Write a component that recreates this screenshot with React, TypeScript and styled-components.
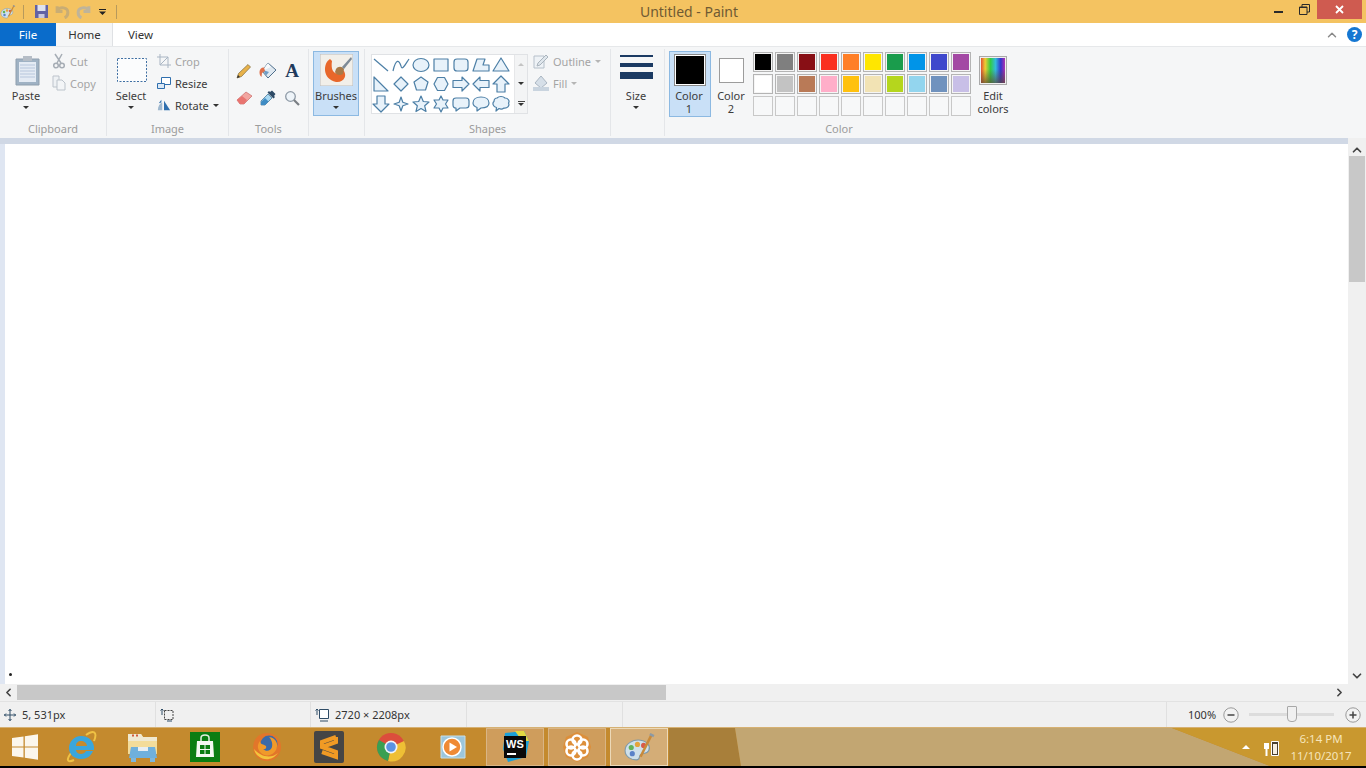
import React from "react";
import styled, { createGlobalStyle } from "styled-components";
import { ChevronUp, ChevronDown, ChevronLeft, ChevronRight } from "lucide-react";

const GlobalStyle = createGlobalStyle`
	html, body {
		margin: 0;
		padding: 0;
		background: #fff;
	}
	* {
		box-sizing: border-box;
	}
`;

const row1 = ["#000000", "#7f7f7f", "#880f15", "#fa3020", "#ff7f27", "#ffe600", "#1a9c4c", "#0094e8", "#3f48cc", "#a349a4"];
const row2 = ["#ffffff", "#c3c3c3", "#b97a57", "#ffaec9", "#ffc10e", "#f2e3b4", "#b5d61d", "#93d5ee", "#7092be", "#c8bfe7"];
const palette = [...row1, ...row2, ...Array(10).fill("")];

const shapePaths = [
	"M2 3L16 15",
	"M1 15C4 2 7 4 9 10C10 15 13 9 17 3",
	"M1 9a8 6.5 0 1 0 16 0a8 6.5 0 1 0-16 0Z",
	"M2 3H16V15H2Z",
	"M5 3H13Q16 3 16 6V12Q16 15 13 15H5Q2 15 2 12V6Q2 3 5 3Z",
	"M1 15L5 3H13L11 9H17V15Z",
	"M9 2L17 15H1Z",
	"M2 2V16H16Z",
	"M9 2L16 9L9 16L2 9Z",
	"M9 2L16 7L13.500 15H4.500L2 7Z",
	"M5.500 2.500H12.500L16 9L12.500 15.500H5.500L2 9Z",
	"M1 5.500H10V2L17 9L10 16V12.500H1Z",
	"M17 5.500H8V2L1 9L8 16V12.500H17Z",
	"M9 1L17 9H13V17H5V9H1Z",
	"M5 1H13V9H17L9 17L1 9H5Z",
	"M9 2L10.800 7.200L16 9L10.800 10.800L9 16L7.200 10.800L2 9L7.200 7.200Z",
	"M9 1L11.300 6.500L17 7L12.700 10.800L14 16.500L9 13.500L4 16.500L5.300 10.800L1 7L6.700 6.500Z",
	"M9 1L11 5H16L13.500 9L16 13H11L9 17L7 13H2L4.500 9L2 5H7Z",
	"M4 3H14Q17 3 17 6V10Q17 13 14 13H8L4 16V13Q1 13 1 10V6Q1 3 4 3Z",
	"M9 2C14 2 17 4.500 17 8C17 11 14 13 9 13L5 16V12.500C2.500 11.500 1 10 1 8C1 4.500 4 2 9 2Z",
	"M5 3C7 1 11 1 13 3C16 3 18 6 16.500 8C18 11 15 13.500 12 13C10 14.500 8 14 7 13.500L4 16L4.500 12.500C1 12 0 8 2 6.500C2 4.500 3.500 3 5 3Z",
];

const Caret = styled.span<{ $c?: string }>`
	display: block;
	width: 0;
	height: 0;
	border-left: 3px solid transparent;
	border-right: 3px solid transparent;
	border-top: 3px solid ${(p) => p.$c || "#333"};
`;

const Screen = styled.div`
	width: 1366px;
	height: 768px;
	display: flex;
	flex-direction: column;
	overflow: hidden;
	font-family: "Noto Sans", "Open Sans", sans-serif;
	font-size: 11px;
	color: #3c3c3c;
`;

const TitleBar = styled.div`
	height: 23px;
	background: #f4c361;
	display: grid;
	grid-template-columns: 1fr auto 1fr;
	align-items: flex-start;
	flex: none;
`;

const QuickAccess = styled.div`
	display: flex;
	align-items: center;
	height: 23px;
`;

const QuickSlot = styled.div<{ $w: number }>`
	width: ${(p) => p.$w}px;
	display: flex;
	justify-content: center;
	align-items: center;
`;

const QuickDivider = styled.div`
	width: 1px;
	height: 14px;
	background: #b79a5c;
`;

const WindowTitle = styled.div`
	font-size: 14px;
	line-height: 23px;
	color: #6f5a33;
	padding-left: 12px;
`;

const WindowControls = styled.div`
	display: flex;
	justify-content: flex-end;
	padding-right: 4px;
`;

const ControlButton = styled.div<{ $w: number; $close?: boolean }>`
	width: ${(p) => p.$w}px;
	height: 19px;
	display: flex;
	align-items: center;
	justify-content: center;
	background: ${(p) => (p.$close ? "#cf5b50" : "transparent")};
`;

const TabRow = styled.div`
	height: 23px;
	flex: none;
	background: #fff;
	display: flex;
	align-items: stretch;
	font-size: 11.500px;
`;

const FileTab = styled.div`
	width: 56px;
	background: #0a6ccb;
	color: #fff;
	display: flex;
	align-items: center;
	justify-content: center;
`;

const Tab = styled.div<{ $active?: boolean }>`
	width: ${(p) => (p.$active ? 57 : 55)}px;
	padding-left: ${(p) => (p.$active ? 1 : 0)}px;
	display: flex;
	align-items: center;
	justify-content: center;
	background: ${(p) => (p.$active ? "#f5f6f7" : "#fff")};
	border-right: ${(p) => (p.$active ? "1px solid #dfe1e4" : "none")};
	color: #333;
`;

const TabSpacer = styled.div`
	flex: 1;
`;

const TabTools = styled.div`
	display: flex;
	align-items: center;
	gap: 8px;
	padding-right: 4px;
`;

const HelpBadge = styled.div`
	width: 15px;
	height: 15px;
	border-radius: 50%;
	background: #1577d2;
	color: #fff;
	font-weight: 700;
	font-size: 12px;
	line-height: 15px;
	text-align: center;
`;

const Ribbon = styled.div`
	height: 92px;
	flex: none;
	background: #f5f6f7;
	display: flex;
	border-top: 1px solid #e6e8ea;
`;

const Group = styled.div<{ $w: number; $last?: boolean }>`
	width: ${(p) => p.$w}px;
	flex: none;
	display: flex;
	flex-direction: column;
	margin: 2px 0;
	border-right: ${(p) => (p.$last ? "none" : "1px solid #e4e6e9")};
`;

const GroupBody = styled.div<{ $pl?: number }>`
	flex: 1;
	display: flex;
	align-items: flex-start;
	padding-left: ${(p) => p.$pl || 0}px;
	min-height: 0;
`;

const GroupLabel = styled.div<{ $pr?: number }>`
	height: 14px;
	line-height: 14px;
	text-align: center;
	color: #9c9c9c;
	padding-right: ${(p) => p.$pr || 0}px;
	flex: none;
`;

const LargeButton = styled.div<{ $w: number; $on?: boolean; $h?: number; $ml?: number }>`
	width: ${(p) => p.$w}px;
	height: ${(p) => p.$h || 64}px;
	margin: 2px 0 0 ${(p) => p.$ml || 0}px;
	flex: none;
	display: flex;
	flex-direction: column;
	align-items: center;
	background: ${(p) => (p.$on ? "#c9e0f7" : "transparent")};
	border: 1px solid ${(p) => (p.$on ? "#8cb9e2" : "transparent")};
	color: #3c3c3c;
`;

const LargeIcon = styled.div`
	height: 36px;
	display: flex;
	align-items: center;
	justify-content: center;
	flex: none;
`;

const LargeText = styled.div<{ $pr?: number }>`
	line-height: 13px;
	text-align: center;
	margin-top: 1px;
	padding-right: ${(p) => p.$pr || 0}px;
`;

const CaretRow = styled.div`
	height: 11px;
	display: flex;
	align-items: center;
	justify-content: center;
`;

const SmallColumn = styled.div<{ $ml: number }>`
	margin-left: ${(p) => p.$ml}px;
	padding-top: 1px;
	display: flex;
	flex-direction: column;
`;

const SmallButton = styled.div<{ $off?: boolean }>`
	height: 22px;
	display: flex;
	align-items: center;
	gap: 4px;
	color: ${(p) => (p.$off ? "#a4a4a4" : "#3c3c3c")};
	white-space: nowrap;
`;

const ToolsGrid = styled.div`
	display: grid;
	grid-template-columns: repeat(3, 24px);
	grid-auto-rows: 27px;
	margin: 8px 0 0 3px;
`;

const ToolCell = styled.div`
	display: flex;
	align-items: center;
	justify-content: center;
`;

const TextTool = styled.span`
	font-family: "Liberation Serif", serif;
	font-weight: 700;
	font-size: 19px;
	color: #1f3a5c;
`;

const Gallery = styled.div`
	margin: 5px 0 0 6px;
	width: 157px;
	height: 60px;
	display: flex;
	background: #fff;
	border: 1px solid #e0e2e5;
	flex: none;
`;

const ShapesGrid = styled.div`
	flex: 1;
	display: grid;
	grid-template-columns: repeat(7, 20px);
	grid-auto-rows: 19.500px;
	align-items: center;
	justify-items: center;
	margin-left: -1px;
`;

const GalleryScroll = styled.div`
	width: 13px;
	background: #f3f4f5;
	border-left: 1px solid #e6e7e9;
	display: flex;
	flex-direction: column;
`;

const GalleryStep = styled.div`
	flex: 1;
	display: flex;
	align-items: center;
	justify-content: center;
	flex-direction: column;
	gap: 1px;
`;

const UpCaret = styled.span`
	width: 0;
	height: 0;
	border-left: 3px solid transparent;
	border-right: 3px solid transparent;
	border-bottom: 3px solid #c4c4c4;
`;

const StackBar = styled.span`
	width: 7px;
	height: 1px;
	background: #444;
`;

const SizeLine = styled.div<{ $h: number; $mt: number }>`
	width: 33px;
	height: ${(p) => p.$h}px;
	margin-top: ${(p) => p.$mt}px;
	background: #1b3a63;
`;

const SizeIcon = styled.div`
	height: 36px;
	display: flex;
	flex-direction: column;
`;

const Swatch = styled.div<{ $size: number; $fill: string; $frame: string }>`
	width: ${(p) => p.$size}px;
	height: ${(p) => p.$size}px;
	background: ${(p) => p.$fill};
	border: 1px solid ${(p) => p.$frame};
	box-shadow: inset 0 0 0 1px #fff;
`;

const PaletteGrid = styled.div`
	display: grid;
	grid-template-columns: repeat(10, 20px);
	grid-auto-rows: 20px;
	gap: 2px;
	margin: 3px 0 0 2px;
	flex: none;
`;

const PaletteCell = styled.div<{ $c: string }>`
	border: 1px solid ${(p) => (p.$c ? "#b4b4b4" : "#c8c8c8")};
	background: ${(p) => p.$c || "#f7f8f9"};
	box-shadow: inset 0 0 0 1px ${(p) => (p.$c ? "#f5f5f5" : "#f7f8f9")};
`;

const RainbowBox = styled.div`
	width: 28px;
	height: 29px;
	border: 1px solid #a9a9a9;
	box-shadow: inset 0 0 0 1px #eee;
	background: linear-gradient(to bottom, rgba(255, 255, 255, 0) 45%, rgba(90, 70, 50, 0.75) 100%),
		linear-gradient(to right, #d33, #ec3, #3c4, #3bd, #33c, #c3a);
`;

const Workspace = styled.div`
	flex: 1;
	min-height: 0;
	display: grid;
	grid-template-columns: 1fr 18px;
	grid-template-rows: 1fr 17px;
	background: #f0f0f0;
`;

const CanvasArea = styled.div`
	background: #dfe6f2;
	border-top: 6px solid #d0d8e5;
	padding-left: 5px;
	display: flex;
	min-height: 0;
`;

const Canvas = styled.div`
	flex: 1;
	background: #fff;
	position: relative;
`;

const CursorDot = styled.span`
	position: absolute;
	left: 4px;
	bottom: 8px;
	width: 3px;
	height: 3px;
	border-radius: 50%;
	background: #222;
`;

const VScroll = styled.div`
	background: #f0f0f0;
	border-top: 6px solid #f0f0f0;
	display: flex;
	flex-direction: column;
`;

const ScrollEnd = styled.div<{ $size: number }>`
	flex: none;
	height: ${(p) => p.$size}px;
	display: flex;
	align-items: center;
	justify-content: center;
	color: #444;
`;

const VTrack = styled.div`
	flex: 1;
	padding: 0 1px;
`;

const VThumb = styled.div`
	height: 126px;
	background: #c8c8c8;
`;

const HScroll = styled.div`
	display: flex;
	background: #f0f0f0;
	align-items: stretch;
`;

const HEnd = styled.div`
	width: 17px;
	flex: none;
	display: flex;
	align-items: center;
	justify-content: center;
	color: #444;
`;

const HTrack = styled.div`
	flex: 1;
	padding: 1px 0;
`;

const HThumb = styled.div`
	width: 649px;
	height: 100%;
	background: #c8c8c8;
`;

const Corner = styled.div`
	background: #f0f0f0;
`;

const StatusBar = styled.div`
	height: 26px;
	flex: none;
	background: #f0f0f0;
	border-top: 1px solid #e2e2e2;
	display: grid;
	grid-template-columns: 156px 155px 156px 156px 544px 1fr;
	font-size: 11px;
	color: #333;
`;

const StatusCell = styled.div<{ $last?: boolean }>`
	display: flex;
	align-items: center;
	gap: 6px;
	padding-left: 4px;
	border-right: ${(p) => (p.$last ? "none" : "1px solid #e0e0e0")};
`;

const ZoomCell = styled(StatusCell)`
	padding-left: 21px;
	gap: 0;
`;

const ZoomMinus = styled.svg`
	margin-left: 7px;
`;

const ZoomTrack = styled.div`
	width: 85px;
	height: 3px;
	background: #dcdcdc;
	margin: 0 11px 0 10px;
	position: relative;
`;

const ZoomThumb = styled.div`
	position: absolute;
	left: 38px;
	top: -7px;
	width: 10px;
	height: 16px;
	background: #f0f0f0;
	border: 1px solid #a8a8a8;
	border-radius: 1px 1px 4px 4px;
`;

const Taskbar = styled.div`
	height: 41px;
	flex: none;
	border-bottom: 2px solid #000;
	border-top: 1px solid #d6b173;
	background: #c48a2e;
	display: flex;
	align-items: stretch;
	position: relative;
`;

const WallpaperLight = styled.div`
	position: absolute;
	inset: 0;
	background: #c2a672;
	clip-path: polygon(735px 0, 1172px 0, 1270px 100%, 741px 100%);
`;

const WallpaperDark = styled.div`
	position: absolute;
	inset: 0;
	background: #a87f3a;
	clip-path: polygon(669px 0, 735px 0, 741px 100%, 669px 100%);
`;

const WallpaperGold = styled.div`
	position: absolute;
	inset: 0;
	background: #c9982f;
	clip-path: polygon(1172px 0, 100% 0, 100% 100%, 1270px 100%);
`;

const StartButton = styled.div`
	width: 50px;
	display: flex;
	align-items: center;
	justify-content: center;
	position: relative;
`;

const PinnedApp = styled.div`
	width: 62px;
	display: flex;
	align-items: center;
	justify-content: center;
	position: relative;
`;

const RunningApp = styled.div<{ $active?: boolean }>`
	width: 58px;
	margin: 0 2px;
	display: flex;
	align-items: center;
	justify-content: center;
	position: relative;
	background: ${(p) => (p.$active ? "#d4ad77" : "#cf9d5c")};
	border: 1px solid ${(p) => (p.$active ? "#ecd9b8" : "#d9b585")};
`;

const TaskSpacer = styled.div`
	flex: 1;
`;

const Tray = styled.div`
	display: flex;
	align-items: center;
	position: relative;
	padding-right: 6px;
`;

const TrayCaret = styled.span`
	width: 0;
	height: 0;
	border-left: 4px solid transparent;
	border-right: 4px solid transparent;
	border-bottom: 4px solid #fff;
	margin-right: 13px;
`;

const Clock = styled.div`
	width: 78px;
	margin-left: 3px;
	text-align: center;
	color: #f6e5bb;
	font-size: 11.500px;
	line-height: 17px;
`;

const ShapeIcon = ({ d }: { d: string }) => (
	<svg width='18' height='18' viewBox='0 0 18 18'>
		<path d={d} fill={d.endsWith("Z") ? "#e8f2fa" : "none"} stroke='#4c7fa6' strokeWidth='1.200' strokeLinejoin='round' />
	</svg>
);

const PaletteIcon = ({ size }: { size: number }) => (
	<svg width={size} height={size} viewBox='0 0 32 32'>
		<path d='M2 19C2 12 10 8 17 9C24 10 27 15 25 19C23 23 19 21 17 23C15 25 17 28 13 28C8 28 2 25 2 19Z' fill='#cfe0ea' stroke='#7d98a8' />
		<circle cx='8' cy='16' r='2.500' fill='#62b35a' />
		<circle cx='14' cy='13' r='2.500' fill='#e5a43a' />
		<circle cx='20' cy='14' r='2.500' fill='#d85a4a' />
		<circle cx='9' cy='22' r='2.500' fill='#5a82c8' />
		<path d='M28 3L17 25' stroke='#c98a3a' strokeWidth='2.500' />
		<path d='M26 3L30 5' stroke='#8d9aa5' strokeWidth='2.500' />
	</svg>
);

const App = () => {
	return (
		<Screen>
			<GlobalStyle />
			<TitleBar>
				<QuickAccess>
					<QuickSlot $w={16}>
						<PaletteIcon size={16} />
					</QuickSlot>
					<QuickSlot $w={15}>
						<QuickDivider />
					</QuickSlot>
					<QuickSlot $w={20}>
						<svg width='15' height='15' viewBox='0 0 15 15'>
							<path d='M1 1H14V14H1Z' fill='#6262a4' />
							<path d='M3.500 1H11.500V7H3.500Z' fill='#dfe3ee' />
							<path d='M4.500 10H10.500V14H4.500Z' fill='#c9c9dd' />
						</svg>
					</QuickSlot>
					<QuickSlot $w={22}>
						<svg width='15' height='15' viewBox='0 0 14 14'>
							<path d='M2 2V7H7M2 6C5 2 12 3 12 8C12 10 11 12 9 13' fill='none' stroke='#c9ad74' strokeWidth='2.800' />
						</svg>
					</QuickSlot>
					<QuickSlot $w={21}>
						<svg width='15' height='15' viewBox='0 0 14 14'>
							<path d='M12 2V7H7M12 6C9 2 2 3 2 8C2 10 3 12 5 13' fill='none' stroke='#bfb49a' strokeWidth='2.800' />
						</svg>
					</QuickSlot>
					<QuickSlot $w={17}>
						<svg width='7' height='6' viewBox='0 0 7 6'>
							<path d='M0 0H7V1H0ZM0 2.500H7L3.500 6Z' fill='#222' />
						</svg>
					</QuickSlot>
					<QuickSlot $w={11}>
						<QuickDivider />
					</QuickSlot>
				</QuickAccess>
				<WindowTitle>Untitled - Paint</WindowTitle>
				<WindowControls>
					<ControlButton $w={26}>
						<svg width='9' height='9' viewBox='0 0 9 9'>
							<path d='M0 6H9V8H0Z' fill='#2a2a2a' />
						</svg>
					</ControlButton>
					<ControlButton $w={26}>
						<svg width='11' height='11' viewBox='0 0 11 11'>
							<path d='M0.500 3H8V10.500H0.500ZM3 3V0.500H10.500V8H8' fill='none' stroke='#2a2a2a' />
							<path d='M0.500 3.500H8' stroke='#2a2a2a' />
						</svg>
					</ControlButton>
					<ControlButton $w={45} $close>
						<svg width='9' height='9' viewBox='0 0 9 9'>
							<path d='M1 1L8 8M8 1L1 8' stroke='#fff' strokeWidth='1.800' />
						</svg>
					</ControlButton>
				</WindowControls>
			</TitleBar>

			<TabRow>
				<FileTab>File</FileTab>
				<Tab $active>Home</Tab>
				<Tab>View</Tab>
				<TabSpacer />
				<TabTools>
					<ChevronUp size={14} color='#8a8a8a' strokeWidth={2.5} />
					<HelpBadge>?</HelpBadge>
				</TabTools>
			</TabRow>

			<Ribbon>
				<Group $w={107}>
					<GroupBody $pl={7}>
						<LargeButton $w={38}>
							<LargeIcon>
								<svg width='27' height='32' viewBox='-1 0 27 32'>
									<path d='M2 5H25V31H2Z' fill='#9fb2c4' stroke='#8f9fae' />
									<path d='M5 8H22V28H5Z' fill='#e4ebf4' />
									<path d='M6 11H21M6 14H21M6 17H21M6 20H21M6 23H21' stroke='#b7c6dc' />
									<path d='M9 2H18V7H9Z' fill='#b5bdc6' />
								</svg>
							</LargeIcon>
							<LargeText>Paste</LargeText>
							<CaretRow>
								<Caret />
							</CaretRow>
						</LargeButton>
						<SmallColumn $ml={7}>
							<SmallButton $off>
								<svg width='14' height='16' viewBox='0 0 14 16'>
									<path d='M3 1L9 10M10 1L5 10' stroke='#a6adb5' strokeWidth='1.500' />
									<circle cx='4' cy='12.500' r='2.300' fill='none' stroke='#a6adb5' strokeWidth='1.500' />
									<circle cx='10' cy='12.500' r='2.300' fill='none' stroke='#a6adb5' strokeWidth='1.500' />
								</svg>
								Cut
							</SmallButton>
							<SmallButton $off>
								<svg width='14' height='16' viewBox='0 0 14 16'>
									<path d='M1 1H7V12H1Z' fill='#eef1f4' stroke='#bcc3cb' />
									<path d='M5 5H10L13 8V15H5Z' fill='#f3f5f7' stroke='#bcc3cb' />
								</svg>
								Copy
							</SmallButton>
						</SmallColumn>
					</GroupBody>
					<GroupLabel>Clipboard</GroupLabel>
				</Group>

				<Group $w={122}>
					<GroupBody $pl={6}>
						<LargeButton $w={36}>
							<LargeIcon>
								<svg width='32' height='26' viewBox='-1 0 32 26'>
									<path d='M1.500 1.500H30.500V24.500H1.500Z' fill='#fbfcfd' stroke='#3f6fa3' strokeDasharray='2 1.500' />
								</svg>
							</LargeIcon>
							<LargeText>Select</LargeText>
							<CaretRow>
								<Caret />
							</CaretRow>
						</LargeButton>
						<SmallColumn $ml={8}>
							<SmallButton $off>
								<svg width='14' height='14' viewBox='0 0 14 14'>
									<path d='M3 0V11H14M0 3H11V14M11 3L3 11' fill='none' stroke='#a9b5c3' />
								</svg>
								Crop
							</SmallButton>
							<SmallButton>
								<svg width='14' height='14' viewBox='0 0 14 14'>
									<path d='M4.500 1.500H13.500V8.500H4.500Z' fill='#fff' stroke='#2f6fae' />
									<path d='M0.500 7.500H7.500V12.500H0.500Z' fill='#dbe8f5' stroke='#2f6fae' />
								</svg>
								Resize
							</SmallButton>
							<SmallButton>
								<svg width='14' height='14' viewBox='0 0 16 14'>
									<path d='M1 13C1 8 3 5 6 4V13Z' fill='#9fb8cf' />
									<path d='M8 2L15 13H8Z' fill='#2f6fae' />
									<path d='M2 5L5 1V4Z' fill='#2f6fae' />
								</svg>
								Rotate
								<Caret />
							</SmallButton>
						</SmallColumn>
					</GroupBody>
					<GroupLabel>Image</GroupLabel>
				</Group>

				<Group $w={80}>
					<GroupBody>
						<ToolsGrid>
							<ToolCell>
								<svg width='16' height='16' viewBox='0 0 16 16'>
									<path d='M1 15L2.500 10.500L12 1.500L14.500 4L5.500 13.500Z' fill='#e8b24a' stroke='#7e6a3c' strokeWidth='0.700' />
									<path d='M1 15L2 12L4 14Z' fill='#333' />
								</svg>
							</ToolCell>
							<ToolCell>
								<svg width='18' height='17' viewBox='0 0 18 17'>
									<path d='M9 1L17 8L9 16L3 9Z' fill='#dfe8f0' stroke='#4f6f8c' />
									<path d='M9 1L12 5L3 9Z' fill='#f7fafc' />
									<path d='M4 8L10 10L7 13.500Z' fill='#6d9cc4' />
									<path d='M0.500 10C0.500 7 3 5 5 5.500L6 9L3 11L2.500 15C1 14 0.500 12 0.500 10Z' fill='#e0704a' />
								</svg>
							</ToolCell>
							<ToolCell>
								<TextTool>A</TextTool>
							</ToolCell>
							<ToolCell>
								<svg width='17' height='14' viewBox='0 0 17 14'>
									<path d='M1 9L10 1L16 5L8 13H4Z' fill='#f2a5a0' stroke='#c96a68' strokeWidth='0.700' />
									<path d='M1 9L6 5L11 9L8 13H4Z' fill='#e87470' />
								</svg>
							</ToolCell>
							<ToolCell>
								<svg width='16' height='16' viewBox='0 0 16 16'>
									<path d='M10 2L12 0.500L15.500 4L14 6L15 7L13.500 8.500L7.500 2.500L9 1Z' fill='#2d4a66' />
									<path d='M8 4L12 8L5 15L1 15L1 11Z' fill='#a8d8f2' stroke='#3a6a8c' strokeWidth='0.700' />
									<path d='M5 8L8.500 11.500L5 15L1 15L1 12Z' fill='#3f8cc4' />
								</svg>
							</ToolCell>
							<ToolCell>
								<svg width='16' height='16' viewBox='0 0 16 16'>
									<circle cx='6.500' cy='6.500' r='4.800' fill='#eef4f9' stroke='#8e9aa6' strokeWidth='1.300' />
									<path d='M10 10L15 15' stroke='#7a7f84' strokeWidth='2.200' />
								</svg>
							</ToolCell>
						</ToolsGrid>
					</GroupBody>
					<GroupLabel>Tools</GroupLabel>
				</Group>

				<Group $w={56}>
					<GroupBody $pl={4}>
						<LargeButton $w={46} $on $h={65}>
							<LargeIcon>
								<svg width='33' height='32' viewBox='0 0 33 32'>
									<path d='M0 0H33V32H0Z' fill='#f2efe9' stroke='#bcbcbc' />
									<path d='M10 5C3 9 2 25 16 28C24 29 28 21 23 16C17 23 10 19 12 7Z' fill='#e8672a' />
									<path d='M16 15C18 12 22 12 24 15L23 20C20 22 16 21 15 18Z' fill='#a87a48' />
									<path d='M22 13L31 3L32 5L24 15Z' fill='#7d8a96' />
								</svg>
							</LargeIcon>
							<LargeText>Brushes</LargeText>
							<CaretRow>
								<Caret />
							</CaretRow>
						</LargeButton>
					</GroupBody>
					<GroupLabel />
				</Group>

				<Group $w={246}>
					<GroupBody>
						<Gallery>
							<ShapesGrid>
								{shapePaths.map((d) => (
									<ShapeIcon key={d} d={d} />
								))}
							</ShapesGrid>
							<GalleryScroll>
								<GalleryStep>
									<UpCaret />
								</GalleryStep>
								<GalleryStep>
									<Caret />
								</GalleryStep>
								<GalleryStep>
									<StackBar />
									<Caret />
								</GalleryStep>
							</GalleryScroll>
						</Gallery>
						<SmallColumn $ml={5}>
							<SmallButton $off>
								<svg width='16' height='16' viewBox='0 0 16 16'>
									<path d='M1 3H11V15H1Z' fill='#eef2f6' stroke='#b6c0ca' />
									<path d='M5 10L13 2L15 4L7 12L4 13Z' fill='#dfe6ec' stroke='#aab4bd' />
								</svg>
								Outline
								<Caret $c='#b5b5b5' />
							</SmallButton>
							<SmallButton $off>
								<svg width='16' height='16' viewBox='0 0 16 16'>
									<path d='M8 1L14 8L8 13L2 8Z' fill='#d6dfe8' stroke='#aab6c2' />
									<path d='M0 12H16V16H0Z' fill='#c9d4df' />
								</svg>
								Fill
								<Caret $c='#b5b5b5' />
							</SmallButton>
						</SmallColumn>
					</GroupBody>
					<GroupLabel>Shapes</GroupLabel>
				</Group>

				<Group $w={54}>
					<GroupBody $pl={4}>
						<LargeButton $w={42}>
							<LargeIcon>
								<SizeIcon>
									<SizeLine $h={2} $mt={3} />
									<SizeLine $h={4} $mt={6} />
									<SizeLine $h={7} $mt={5} />
								</SizeIcon>
							</LargeIcon>
							<LargeText>Size</LargeText>
							<CaretRow>
								<Caret />
							</CaretRow>
						</LargeButton>
					</GroupBody>
					<GroupLabel />
				</Group>

				<Group $w={356} $last>
					<GroupBody $pl={4}>
						<LargeButton $w={42} $on $h={66}>
							<LargeIcon>
								<Swatch $size={32} $fill='#000' $frame='#8a8a8a' />
							</LargeIcon>
							<LargeText $pr={2}>
								Color
								<br />1
							</LargeText>
						</LargeButton>
						<LargeButton $w={40} $h={66}>
							<LargeIcon>
								<Swatch $size={25} $fill='#fff' $frame='#9c9c9c' />
							</LargeIcon>
							<LargeText>
								Color
								<br />2
							</LargeText>
						</LargeButton>
						<PaletteGrid>
							{palette.map((c, i) => (
								<PaletteCell key={i} $c={c} />
							))}
						</PaletteGrid>
						<LargeButton $w={38} $ml={3}>
							<LargeIcon>
								<RainbowBox />
							</LargeIcon>
							<LargeText>
								Edit
								<br />
								colors
							</LargeText>
						</LargeButton>
					</GroupBody>
					<GroupLabel $pr={8}>Color</GroupLabel>
				</Group>
			</Ribbon>

			<Workspace>
				<CanvasArea>
					<Canvas>
						<CursorDot />
					</Canvas>
				</CanvasArea>
				<VScroll>
					<ScrollEnd $size={12}>
						<ChevronUp size={14} strokeWidth={3} />
					</ScrollEnd>
					<VTrack>
						<VThumb />
					</VTrack>
					<ScrollEnd $size={17}>
						<ChevronDown size={14} strokeWidth={3} />
					</ScrollEnd>
				</VScroll>
				<HScroll>
					<HEnd>
						<ChevronLeft size={13} strokeWidth={3} />
					</HEnd>
					<HTrack>
						<HThumb />
					</HTrack>
					<HEnd>
						<ChevronRight size={13} strokeWidth={3} />
					</HEnd>
				</HScroll>
				<Corner />
			</Workspace>

			<StatusBar>
				<StatusCell>
					<svg width='12' height='12' viewBox='0 0 12 12'>
						<path d='M6 0V12M0 6H12M4.500 2L6 0.500L7.500 2M4.500 10L6 11.500L7.500 10M2 4.500L0.500 6L2 7.500M10 4.500L11.500 6L10 7.500' fill='none' stroke='#2f4c66' />
					</svg>
					5, 531px
				</StatusCell>
				<StatusCell>
					<svg width='14' height='14' viewBox='0 0 14 14'>
						<path d='M4.500 2.500H13V11.500H4.500Z' fill='none' stroke='#444' strokeDasharray='2 1' />
						<path d='M2 1V7M0.500 2.500L2 1L3.500 2.500M7 13H12' fill='none' stroke='#2f4c66' />
					</svg>
				</StatusCell>
				<StatusCell>
					<svg width='14' height='14' viewBox='0 0 14 14'>
						<path d='M4.500 1.500H13.500V10.500H4.500Z' fill='#fff' stroke='#2f4c66' />
						<path d='M2 1V7M0.500 2.500L2 1L3.500 2.500M5 13H13' fill='none' stroke='#2f4c66' />
					</svg>
					2720 × 2208px
				</StatusCell>
				<StatusCell />
				<StatusCell />
				<ZoomCell $last>
					100%
					<ZoomMinus width='16' height='16' viewBox='0 0 16 16'>
						<circle cx='8' cy='8' r='7.200' fill='#f2f2f2' stroke='#9a9a9a' />
						<path d='M4.500 8H11.500' stroke='#444' strokeWidth='1.500' />
					</ZoomMinus>
					<ZoomTrack>
						<ZoomThumb />
					</ZoomTrack>
					<svg width='16' height='16' viewBox='0 0 16 16'>
						<circle cx='8' cy='8' r='7.200' fill='#f2f2f2' stroke='#9a9a9a' />
						<path d='M4.500 8H11.500M8 4.500V11.500' stroke='#444' strokeWidth='1.500' />
					</svg>
				</ZoomCell>
			</StatusBar>

			<Taskbar>
				<WallpaperDark />
				<WallpaperLight />
				<WallpaperGold />
				<StartButton>
					<svg width='26' height='26' viewBox='0 0 26 26'>
						<path d='M0 4L11.500 2.400V12.400H0ZM12.800 2.200L26 0.300V12.400H12.800ZM0 13.600H11.500V23.600L0 22ZM12.800 13.600H26V25.700L12.800 23.800Z' fill='#fbf6ec' />
					</svg>
				</StartButton>
				<PinnedApp>
					<svg width='32' height='32' viewBox='0 0 32 32'>
						<path d='M6 22C1 29 2 32 9 29M21 4C28 -1 33 0 29 10' fill='none' stroke='#f0c244' strokeWidth='2' />
						<path d='M16 5C9 5 4 11 4 17C4 24 10 28 16 28C22 28 26 25 28 20H21C20 22 18 23 16 23C13 23 11 21 11 19H29C30 11 24 5 16 5ZM11 15C11 12 13 10 16 10C19 10 22 12 22 15Z' fill='#3aa6dd' />
					</svg>
				</PinnedApp>
				<PinnedApp>
					<svg width='32' height='30' viewBox='0 0 32 30'>
						<path d='M1 2H14L16 5H30V22H1Z' fill='#f3dc9a' />
						<path d='M1 2H14L16 5H30V9H1Z' fill='#efe9d2' />
						<path d='M5 3.500H7M9 3.500H11' stroke='#d25a3a' strokeWidth='2' />
						<path d='M4 15H28L30 26H2Z' fill='#6fb0dc' />
						<path d='M11 15H21V19H11Z' fill='#e8eef2' />
						<path d='M4 26H9V30H4ZM23 26H28V30H23Z' fill='#7fb7dc' />
					</svg>
				</PinnedApp>
				<PinnedApp>
					<svg width='30' height='30' viewBox='0 0 30 30'>
						<path d='M0 0H30V30H0Z' fill='#0a7d12' />
						<path d='M7 9H23L24 25H6Z' fill='#f4f8f2' />
						<path d='M11 9V6C11 2 19 2 19 6V9' fill='none' stroke='#e6f0e2' strokeWidth='1.500' />
						<path d='M10 13H14.500V17H10ZM15.500 13H20V17H15.500ZM10 18H14.500V22H10ZM15.500 18H20V22H15.500Z' fill='#0a7d12' />
					</svg>
				</PinnedApp>
				<PinnedApp>
					<svg width='30' height='30' viewBox='0 0 30 30'>
						<circle cx='15' cy='15' r='14' fill='#e2762a' />
						<circle cx='17' cy='12' r='8.500' fill='#3a6aa8' />
						<path d='M17 5C24 6 27 12 24 18C21 24 13 25 9 21C5 17 5 13 8 9C8 13 12 12 14 14C15 16 13 18 11 17C14 20 19 19 20 15C21 11 19 7 17 5Z' fill='#f09a2a' />
						<path d='M2 17C4 27 18 32 26 21C19 27 9 25 2 17Z' fill='#f4c53c' />
					</svg>
				</PinnedApp>
				<PinnedApp>
					<svg width='32' height='32' viewBox='0 0 32 32'>
						<path d='M1 2Q1 0 3 0H29Q31 0 31 2V30Q31 32 29 32H3Q1 32 1 30Z' fill='#454545' />
						<path d='M23 6L9 11V16L23 21V26L9 21M23 6V11L9 16' fill='none' stroke='#f09a24' strokeWidth='4' />
					</svg>
				</PinnedApp>
				<PinnedApp>
					<svg width='30' height='30' viewBox='0 0 30 30'>
						<circle cx='15' cy='15' r='14' fill='#dc4d3c' />
						<path d='M15 15L28 9A14 14 0 0 1 12 29Z' fill='#eebf35' />
						<path d='M15 15L12 29A14 14 0 0 1 3 8Z' fill='#3a9f52' />
						<circle cx='15' cy='15' r='6.500' fill='#f0f4f8' />
						<circle cx='15' cy='15' r='4.800' fill='#5a93e2' />
					</svg>
				</PinnedApp>
				<PinnedApp>
					<svg width='28' height='28' viewBox='0 0 28 28'>
						<path d='M2 3H26V25H2Z' fill='#9cc6dc' stroke='#c7dfe9' />
						<circle cx='13' cy='14' r='9' fill='#ef8a35' stroke='#fff' strokeWidth='1.500' />
						<path d='M10.500 9.500L18 14L10.500 18.500Z' fill='#fff' />
					</svg>
				</PinnedApp>
				<RunningApp>
					<svg width='30' height='32' viewBox='0 0 30 32'>
						<path d='M5 2L24 0L29 10L26 26L8 31L3 18Z' fill='#1ba0d8' />
						<path d='M15 0L24 0L29 10L22 10Z' fill='#e3d842' />
						<path d='M4 5H26V27H4Z' fill='#0a0a0a' />
						<text x='6' y='17' fontFamily='Liberation Sans, sans-serif' fontSize='11' fontWeight='700' fill='#fff'>
							WS
						</text>
						<path d='M7 22H16V24H7Z' fill='#fff' />
					</svg>
				</RunningApp>
				<RunningApp>
					<svg width='28' height='30' viewBox='0 0 28 30'>
						<path d='M14 0L25 5L28 15L25 25L14 30L3 25L0 15L3 5Z' fill='#dd8f3a' />
						<g fill='none' stroke='#fff' strokeWidth='2.600'>
							<circle cx='14' cy='8' r='4.500' />
							<circle cx='8' cy='12' r='4.500' />
							<circle cx='20' cy='12' r='4.500' />
							<circle cx='8' cy='19' r='4.500' />
							<circle cx='20' cy='19' r='4.500' />
							<circle cx='14' cy='23' r='4.500' />
						</g>
					</svg>
				</RunningApp>
				<RunningApp $active>
					<PaletteIcon size={33} />
				</RunningApp>
				<TaskSpacer />
				<Tray>
					<TrayCaret />
					<svg width='16' height='17' viewBox='0 0 16 17'>
						<path d='M2 0V4M5 0V4M1 4H6V10H4.500V17H2.500V10H1Z' fill='#fff' />
						<path d='M8.500 2.500H15.500V16.500H8.500Z' fill='#4a4030' stroke='#fff' />
						<path d='M10 5H14V15H10Z' fill='#f6efe0' />
					</svg>
					<Clock>
						6:14 PM
						<br />
						11/10/2017
					</Clock>
				</Tray>
			</Taskbar>
		</Screen>
	);
};

export default App;
